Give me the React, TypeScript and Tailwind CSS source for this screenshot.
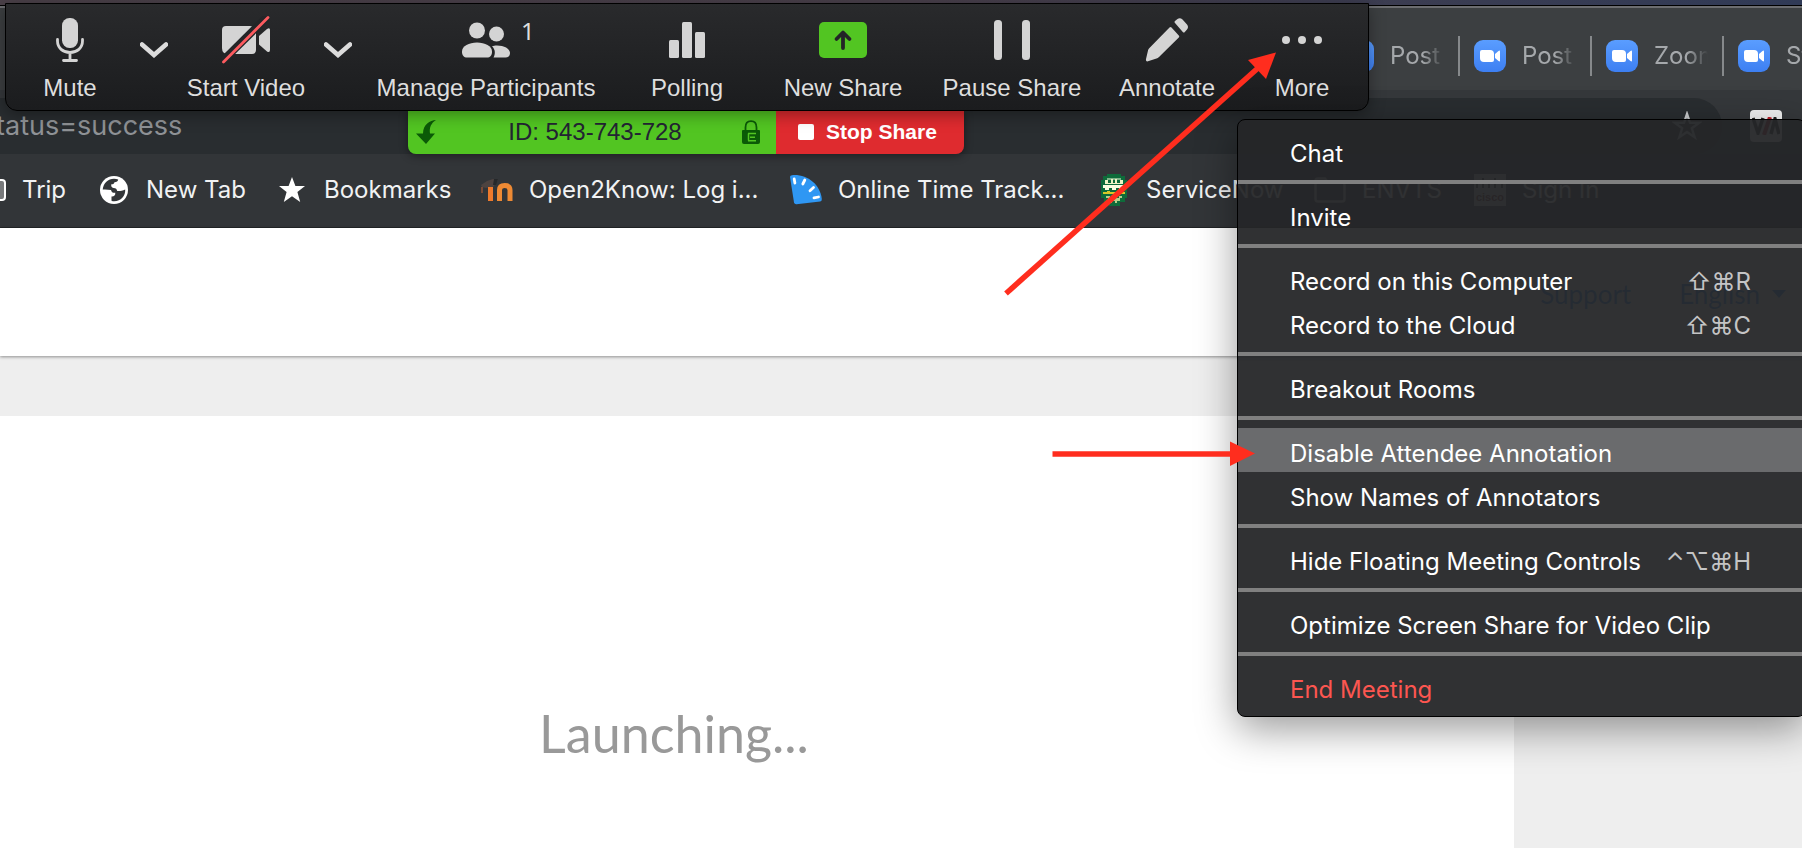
import React from "react";

const tabs = ["Post", "Post", "Zoom", "Start"];

function CameraFavicon() {
  return (
    <svg viewBox="0 0 32 32" className="size-8 shrink-0" aria-hidden="true">
      <defs>
        <linearGradient id="cam" x1="0" y1="0" x2="0" y2="1">
          <stop offset="0" stopColor="#5a9dff" />
          <stop offset="1" stopColor="#3d7ff2" />
        </linearGradient>
      </defs>
      <rect width="32" height="32" rx="9" fill="url(#cam)" />
      <path d="M6 12q0-2 2-2h8q4 0 4 4v6q0 2-2 2h-8q-4 0-4-4z" fill="#fff" />
      <path d="M21 14l3.500-3q1.500-1 1.500.5v9q0 1.500-1.500.500l-3.500-3z" fill="#fff" />
    </svg>
  );
}

function MicIcon() {
  return (
    <svg viewBox="0 0 28 44" className="h-11 w-7" aria-hidden="true">
      <rect x="6" y="0" width="16" height="30" rx="7.500" fill="#d4d4d4" />
      <path d="M1.500 21.500v1.500c0 7 5.500 11.500 12.500 11.500S26.500 30 26.500 23v-1.500M14 35v7M7.500 42.500h13" fill="none" stroke="#d4d4d4" strokeWidth="2.800" strokeLinecap="round" />
    </svg>
  );
}

function VideoOffIcon() {
  return (
    <svg viewBox="0 0 48 48" className="size-12" aria-hidden="true">
      <path d="M4 10h24q6 0 6 6v18q0 4-4 4H6q-6 0-6-6V14q0-4 4-4z" fill="#d4d4d4" />
      <path d="M37 20l8-7q3-2 3 1v20q0 3-3 1.500l-8-7z" fill="#d4d4d4" />
      <path d="M-1 44.500L44.500-.5" stroke="#232527" strokeWidth="5" />
      <path d="M1.500 46L46.500 1.500" stroke="#232527" strokeWidth="5" />
      <path d="M1.500 46L46 1.500" stroke="#fc5b5f" strokeWidth="2.800" strokeLinecap="round" />
    </svg>
  );
}

function PeopleIcon() {
  return (
    <svg viewBox="0 0 48 36" className="h-9 w-12" aria-hidden="true">
      <g fill="#d4d4d4">
        <circle cx="15" cy="8.500" r="8" />
        <circle cx="34.500" cy="12" r="7.500" />
        <path d="M0 29.500C0 24 7 20.500 15 20.500s15 3.500 15 9c0 4-2 6-5 6H5c-3 0-5-2-5-6z" />
        <path d="M30 24.200c1.500-.5 3-.7 5-.7 7 0 13 3 13 7.500 0 3-2 4.500-4.500 4.500H31.500c2-3.500 2-8-1.500-11.300z" />
      </g>
    </svg>
  );
}

function PollIcon() {
  return (
    <svg viewBox="0 0 36 36" className="size-9" aria-hidden="true">
      <g fill="#d4d4d4">
        <rect x="0" y="18" width="10" height="18" rx="1.500" />
        <rect x="13" y="0" width="10" height="36" rx="1.500" />
        <rect x="26" y="10" width="10" height="26" rx="1.500" />
      </g>
    </svg>
  );
}

function ShareIcon() {
  return (
    <svg viewBox="0 0 48 36" className="h-9 w-12" aria-hidden="true">
      <rect width="48" height="36" rx="5" fill="#52c522" />
      <path d="M24 26V11M17.500 17L24 10.500 30.500 17" fill="none" stroke="#232527" strokeWidth="3.800" strokeLinecap="round" strokeLinejoin="round" />
    </svg>
  );
}

function PauseIcon() {
  return (
    <svg viewBox="0 0 36 40" className="h-10 w-9" aria-hidden="true">
      <rect x="0" width="8" height="40" rx="3.500" fill="#d4d4d4" />
      <rect x="28" width="8" height="40" rx="3.500" fill="#d4d4d4" />
    </svg>
  );
}

function PencilIcon() {
  return (
    <svg viewBox="0 0 44 44" className="size-11" aria-hidden="true">
      <path d="M24.500 9.500q1-1 2 0l7.300 8q1 1 0 2L14 39q-1.200 1-2.500 1.500L3 43.300Q.8 43.800.9 41.500L3 32.500q.3-1.200 1.200-2.200z" fill="#d4d4d4" />
      <path d="M30 5q-1-1 0-2l2.500-2Q35-.5 37.500 1.500L42 6.500q2 2.500 0 5L39.800 14q-1 1-2 0z" fill="#d4d4d4" />
    </svg>
  );
}

function DotsIcon() {
  return (
    <svg viewBox="0 0 40 8" className="h-2 w-10" aria-hidden="true">
      <g fill="#d4d4d4">
        <circle cx="4" cy="4" r="4" />
        <circle cx="20" cy="4" r="4" />
        <circle cx="36" cy="4" r="4" />
      </g>
    </svg>
  );
}

function Chevron({ label }: { label: string }) {
  return (
    <button aria-label={label} className="flex w-10 justify-center pt-[38px]">
      <svg viewBox="0 0 28 16" className="h-4 w-7" aria-hidden="true">
        <path d="M2 2.500L14 13 26 2.500" fill="none" stroke="#dcdcdc" strokeWidth="4.600" strokeLinecap="round" />
      </svg>
    </button>
  );
}

function Tool({ width, label, children }: { width: string; label: string; children: React.ReactNode }) {
  return (
    <button className={`flex flex-col items-center pt-3 ${width}`}>
      <span className="relative flex h-12 items-center">{children}</span>
      <span className="mt-[10px] text-2xl leading-7 whitespace-nowrap">{label}</span>
    </button>
  );
}

function ShareToolbar() {
  return (
    <div className="absolute top-[3px] left-[5px] flex h-[108px] rounded-b-xl border border-black bg-linear-to-b from-[#292a2c] to-[#1b1c1e] font-['Liberation_Sans',sans-serif] text-[#dedede] shadow-[0_4px_16px_rgba(0,0,0,0.35)]">
      <Tool width="w-32" label="Mute"><MicIcon /></Tool>
      <Chevron label="Audio options" />
      <Tool width="w-36" label="Start Video"><VideoOffIcon /></Tool>
      <Chevron label="Video options" />
      <Tool width="w-64" label="Manage Participants">
        <PeopleIcon />
        <span className="absolute top-0 left-[59px] font-['Noto_Sans',sans-serif] text-2xl leading-[30px]">1</span>
      </Tool>
      <Tool width="w-[146px]" label="Polling"><PollIcon /></Tool>
      <Tool width="w-[166px]" label="New Share"><ShareIcon /></Tool>
      <Tool width="w-[172px]" label="Pause Share"><PauseIcon /></Tool>
      <Tool width="w-[138px]" label="Annotate"><PencilIcon /></Tool>
      <Tool width="w-[132px]" label="More"><DotsIcon /></Tool>
    </div>
  );
}

function ShareStatus() {
  return (
    <div className="absolute top-[110px] left-[408px] flex h-11 overflow-hidden rounded-b-lg font-['Liberation_Sans',sans-serif] shadow-[0_2px_8px_rgba(0,0,0,0.4)]">
      <div className="flex w-[368px] items-center justify-between bg-[#52c522] pr-4 pl-2">
        <svg viewBox="0 0 20 24" className="h-6 w-5" aria-hidden="true">
          <path d="M20 0C14 .5 7 4 7 13.500H0L10 24 19 13.500h-5C13 8 15 3 20 0z" fill="#0b5a07" />
        </svg>
        <span className="pl-3 text-2xl text-[#232333]">ID: 543-743-728</span>
        <svg viewBox="0 0 18 24" className="h-6 w-[18px]" aria-hidden="true">
          <path d="M3.500 11V7.500C3.500 3.500 5.500 1.200 9 1.200s5.500 2.300 5.500 6.300V11" fill="none" stroke="#0b5a07" strokeWidth="1.800" />
          <path d="M1 10h16q1 0 1 1v11q0 2-2 2H2q-2 0-2-2V11q0-1 1-1z" fill="#0b5a07" />
          <path d="M6 13.500h8M8 17.200h5M6 20.800h8M6.500 13.500v7" stroke="#52c522" strokeWidth="1.500" fill="none" />
        </svg>
      </div>
      <button className="flex w-[188px] items-center gap-3 bg-[#df2b2f] pl-[22px] text-[21px] font-bold text-white">
        <span className="size-4 rounded-xs bg-white" />
        Stop Share
      </button>
    </div>
  );
}

function GlobeIcon() {
  return (
    <svg viewBox="0 0 28 28" className="size-7" aria-hidden="true">
      <circle cx="14" cy="14" r="14" fill="#fff" />
      <path d="M2.700 13.500C3.500 7 8 2.800 14 2.800c1.500 0 3 .3 4.200.8-.3 1.800-1.500 2.600-3.700 2.700-.5 1.700-1.500 2-3.200 2-.3 2 .2 3.400 2.200 3.700 2.500 0 3.300 1 3.700 3 2.500.3 5-.2 8-1.500.5 6.500-4.500 11.800-11 11.800-1 0-2-.1-2.700-.5v-4.300c2.500.2 4-1 3.800-3.700-2.300.3-3.800-.5-4.300-2.800-2.800-.5-5.300-.7-8.300-.5z" fill="#323538" />
    </svg>
  );
}

function StarIcon() {
  return (
    <svg viewBox="0 0 26 25" className="h-[25px] w-[26px]" aria-hidden="true">
      <path d="M13 0l3.400 9H26l-7.600 5.900L21.200 25 13 19.200 4.800 25l2.800-10.100L0 9h9.600z" fill="#fff" />
    </svg>
  );
}

function MoodleIcon() {
  return (
    <svg viewBox="0 0 32 32" className="size-8" aria-hidden="true">
      <path d="M0 11l6-4 6-2h5l-1 3-4 5-7 1-4-1z" fill="#4d4340" />
      <path d="M13 5h4l-2 6h-3z" fill="#25282a" />
      <path d="M1 13v6" stroke="#7a4a35" strokeWidth="2" />
      <path d="M9.500 27V13" stroke="#ee7a2c" strokeWidth="5" />
      <path d="M18.500 27V16q0-4.500 5.200-4.500T29 16v11" fill="none" stroke="#ee8a34" strokeWidth="5" />
    </svg>
  );
}

function FanIcon() {
  return (
    <svg viewBox="0 0 32 32" className="size-8" aria-hidden="true">
      <path d="M0 3Q0 1.500 2 1.200C17 0 30 10 31.800 25q.2 2-1.600 2.500L6.500 30.300Q4.500 30.500 4 28.500z" fill="#2f97f3" />
      <path d="M4.200 5l.7 4M14.800 6l-2 4M23.500 13.500l-3.500 3.200M28.500 23l-4.500.9" stroke="#fff" strokeWidth="2.800" strokeLinecap="round" />
    </svg>
  );
}

function RobotIcon() {
  return (
    <svg viewBox="0 0 26 32" className="h-8 w-[26px]" aria-hidden="true">
      <path d="M6 0h14v2h4v4h2v18h-2v4h-5v4H8v-4H3v-4H0V6h2V2h4z" fill="#0e6b3a" />
      <path d="M6 4h14v2H6z" fill="#7fb58a" />
      <path d="M4 6h3v3h3V5h2v4h2V5h2v4h3V6h3v4H4z" fill="#eef3c4" />
      <path d="M2 11h22v3h-2v2h-4v-2h-3v2h-4v-2H8v2H4v-2H2z" fill="#fbfde0" />
      <path d="M2 18h4v-1h3v1h8v-1h3v1h4v2H2z" fill="#d8c828" />
      <path d="M5 22h4v2h3v-1h3v1h3v-2h3v2h-2v3h-3v2h-2v-2h-3v2h-2v-2H7v-3H5z" fill="#b9d08c" />
    </svg>
  );
}

function FolderIcon() {
  return (
    <svg viewBox="0 0 32 26" className="h-[26px] w-8" aria-hidden="true">
      <path d="M1.500 4q0-2.500 2.500-2.500h7l3 4h14q2.500 0 2.500 2.500v14q0 2.500-2.500 2.500H4q-2.500 0-2.500-2.500z" fill="none" stroke="#b9bbbd" strokeWidth="2.500" />
    </svg>
  );
}

function CiscoIcon() {
  return (
    <span className="flex size-8 flex-col items-center justify-between bg-[#c4c4c4] font-['Liberation_Sans',sans-serif] text-[11px] leading-[18px] font-bold text-[#5a1014]">
      <svg viewBox="0 0 32 14" className="h-[14px] w-8" aria-hidden="true">
        <path d="M3 9v5M9 4v10M15 9v5M21 4v10M28 9v5" stroke="#222" strokeWidth="2" />
      </svg>
      cisco
    </span>
  );
}

const bookmarks = [
  { label: "New Tab", width: "w-[178px]", icon: <GlobeIcon /> },
  { label: "Bookmarks", width: "w-[205px]", icon: <StarIcon /> },
  { label: "Open2Know: Log i...", width: "w-[309px]", icon: <MoodleIcon /> },
  { label: "Online Time Track...", width: "w-[308px]", icon: <FanIcon /> },
  { label: "ServiceNow", width: "w-[216px]", icon: <RobotIcon /> },
  { label: "ENVTS", width: "w-40", icon: <FolderIcon /> },
  { label: "Sign In", width: "w-36", icon: <CiscoIcon /> },
];

function Browser() {
  return (
    <header className="font-[Inter,sans-serif]">
      <div className="h-[5px] bg-linear-to-r from-[#4a4048] via-[#483f4a] to-[#303a56]" />
      <div className="border-t border-black bg-[#3c3f41]">
        <div className="h-0.5 bg-[#6c6d70]" />
        <div className="flex h-[82px] justify-end overflow-hidden">
          <nav className="flex w-[474px] pt-7">
            {tabs.map((tab, i) => (
              <a key={i} href="#tab" className="flex h-10 w-[132px] shrink-0 items-center border-r-2 border-[#86898b] pl-[14px] text-2xl text-[#a5a8ab]">
                <CameraFavicon />
                <span className="ml-4 w-[54px] overflow-hidden mask-r-from-60% mask-r-to-100%">{tab}</span>
              </a>
            ))}
          </nav>
        </div>
      </div>
      <div className="flex h-16 items-start bg-[#35383b]">
        <div className="mt-2 flex h-14 flex-1 items-center justify-between rounded-r-full bg-[#292d30] pr-5">
          <input aria-label="Address" defaultValue="tatus=success" className="-ml-1 w-60 bg-transparent text-[27px] text-[#8f9296] outline-none" />
          <button aria-label="Bookmark this page">
            <svg viewBox="0 0 30 30" className="size-[30px]" aria-hidden="true">
              <path d="M15 3l3 8.800h9.300l-7.500 5.500 2.900 9L15 20.900l-7.700 5.400 2.900-9-7.500-5.500H12z" fill="none" stroke="#c9cbcd" strokeWidth="2.400" />
            </svg>
          </button>
        </div>
        <button aria-label="Extension" className="mt-5 mr-5 ml-7 flex size-8 items-center justify-center rounded-sm bg-[#f2f2f2]">
          <svg viewBox="0 0 28 18" className="h-[18px] w-7" aria-hidden="true">
            <path d="M1 1l5 15L11 1M19 17l4-15 4 15" fill="none" stroke="#222" strokeWidth="3.500" />
            <path d="M18 0l-6 18" stroke="#c0202a" strokeWidth="4" />
          </svg>
        </button>
      </div>
      <nav className="flex h-[74px] items-center overflow-hidden border-b border-[#222527] bg-[#323538] pb-0.5 text-2xl whitespace-nowrap text-[#f1f2f3]">
        <a href="#trip" className="flex w-[98px] shrink-0 items-center">
          <span className="h-[22px] w-1.5 rounded-r-sm border-y-2 border-r-2 border-white bg-[#77797b]" />
          <span className="ml-4">Trip</span>
        </a>
        {bookmarks.map((b) => (
          <a key={b.label} href="#bookmark" className={`flex shrink-0 items-center gap-4 ${b.width}`}>
            <span className="flex w-8 justify-center">{b.icon}</span>
            {b.label}
          </a>
        ))}
      </nav>
    </header>
  );
}

function Page() {
  return (
    <>
      <div className="relative flex h-32 items-start justify-end gap-12 bg-white pt-[46px] pr-4 font-[Lato,sans-serif] text-[26px] leading-10 text-[#2d8cff] shadow-[0_1px_3px_rgba(0,0,0,0.4)]">
        <a href="#support">Support</a>
        <button className="flex items-center gap-3">
          English
          <span className="border-x-[7px] border-t-8 border-x-transparent border-t-current" />
        </button>
      </div>
      <main className="mt-[60px] mr-[288px] flex-1 bg-white pt-[285px] pr-[166px] text-center font-[Lato,sans-serif] text-[52px] leading-[64px] text-[#999999]">
        Launching...
      </main>
    </>
  );
}

type Item = { label: string; keys?: string; active?: boolean; danger?: boolean };

const groups: Item[][] = [
  [{ label: "Chat" }],
  [{ label: "Invite" }],
  [
    { label: "Record on this Computer", keys: "⇧⌘R" },
    { label: "Record to the Cloud", keys: "⇧⌘C" },
  ],
  [{ label: "Breakout Rooms" }],
  [{ label: "Disable Attendee Annotation", active: true }, { label: "Show Names of Annotators" }],
  [{ label: "Hide Floating Meeting Controls", keys: "⌃⌥⌘H" }],
  [{ label: "Optimize Screen Share for Video Clip" }],
  [{ label: "End Meeting", danger: true }],
];

function MoreMenu() {
  return (
    <div
      role="menu"
      className="absolute top-[119px] -right-1 left-[1237px] rounded-lg border border-black bg-[#252628]/95 font-[Inter,sans-serif] text-2xl text-white shadow-[0_12px_40px_rgba(0,0,0,0.4)]"
    >
      {groups.map((group, g) => (
        <div key={g} className={g === 0 ? "py-2" : "border-t-4 border-[#808080] py-2"}>
          {group.map((item) => (
            <button
              key={item.label}
              role="menuitem"
              className={`flex h-11 w-full items-center justify-between pt-2 pr-[54px] pl-[52px] whitespace-nowrap ${item.active ? "bg-[#6a6b6d]" : ""} ${item.danger ? "text-[#fc5650]" : ""}`}
            >
              {item.label}
              {item.keys && <kbd className="font-[Inter,'DejaVu_Sans',sans-serif] text-[#c4c4c5]">{item.keys}</kbd>}
            </button>
          ))}
        </div>
      ))}
    </div>
  );
}

function Arrows() {
  return (
    <svg className="pointer-events-none absolute top-0 left-0 h-full w-full" aria-hidden="true">
      <g stroke="#ff2d1e" strokeWidth="5.500">
        <path d="M1006 293.500L1258 68" />
        <path d="M1052.500 454H1232" />
      </g>
      <g fill="#ff2d1e">
        <path d="M1276 52.500L1248 60 1266 79z" />
        <path d="M1230 441.500V466L1255 453.500z" />
      </g>
    </svg>
  );
}

export default function App() {
  return (
    <div className="relative flex min-h-screen flex-col overflow-hidden bg-[#eeeeee]">
      <Browser />
      <Page />
      <ShareStatus />
      <ShareToolbar />
      <MoreMenu />
      <Arrows />
    </div>
  );
}
